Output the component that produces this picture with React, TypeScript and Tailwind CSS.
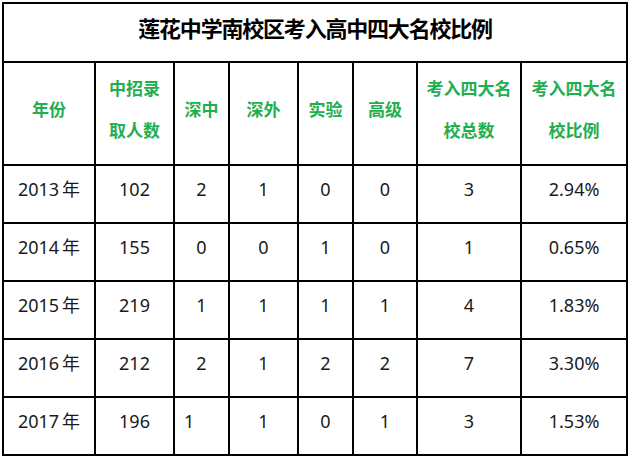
import React from 'react';

const cols = [92, 79, 55, 69, 55, 64, 104, 106];

const header: string[][] = [
  ['年份'],
  ['中招录', '取人数'],
  ['深中'],
  ['深外'],
  ['实验'],
  ['高级'],
  ['考入四大名', '校总数'],
  ['考入四大名', '校比例'],
];

const rows: string[][] = [
  ['2013', '102', '2', '1', '0', '0', '3', '2.94%'],
  ['2014', '155', '0', '0', '1', '0', '1', '0.65%'],
  ['2015', '219', '1', '1', '1', '1', '4', '1.83%'],
  ['2016', '212', '2', '1', '2', '2', '7', '3.30%'],
  ['2017', '196', '1', '1', '0', '1', '3', '1.53%'],
];

export default function App() {
  return (
    <div
      className="w-[630px] h-[460px] bg-white p-[2px]"
      style={{ fontFamily: '"Noto Sans CJK SC", "Noto Sans", sans-serif' }}
    >
      <table className="w-[626px] table-fixed border-collapse">
        <colgroup>
          {cols.map((w, i) => (
            <col key={i} style={{ width: w }} />
          ))}
        </colgroup>
        <tbody>
          <tr className="h-[59px]">
            <td colSpan={8} className="border-2 border-black text-center align-middle pb-[10px]">
              <span className="text-[22px] font-bold text-black tracking-[-1.2px]">莲花中学南校区考入高中四大名校比例</span>
            </td>
          </tr>
          <tr className="h-[103px]">
            {header.map((lines, i) => (
              <td key={i} className="border-2 border-black text-center align-middle pb-[10px]">
                {lines.map((l, j) => (
                  <div key={j} className="text-[17px] font-bold text-[#1fae50] leading-[42px] whitespace-nowrap">
                    {l}
                  </div>
                ))}
              </td>
            ))}
          </tr>
          {rows.map((r, ri) => (
            <tr key={ri} className="h-[58px]">
              {r.map((c, ci) => {
                const leftAlign = ri === 4 && ci === 2;
                return (
                  <td
                    key={ci}
                    className={
                      'border-2 border-black align-middle pb-[10px] text-[18px] text-[#1a1a1a] whitespace-nowrap font-["Noto_Sans","Noto_Sans_CJK_SC",sans-serif] ' +
                      (leftAlign ? 'text-left pl-[9px]' : 'text-center')
                    }
                  >
                    {c}
                    {ci === 0 && <span className="ml-[3px] font-['Noto_Sans_CJK_SC',sans-serif]">年</span>}
                  </td>
                );
              })}
            </tr>
          ))}
        </tbody>
      </table>
    </div>
  );
}
